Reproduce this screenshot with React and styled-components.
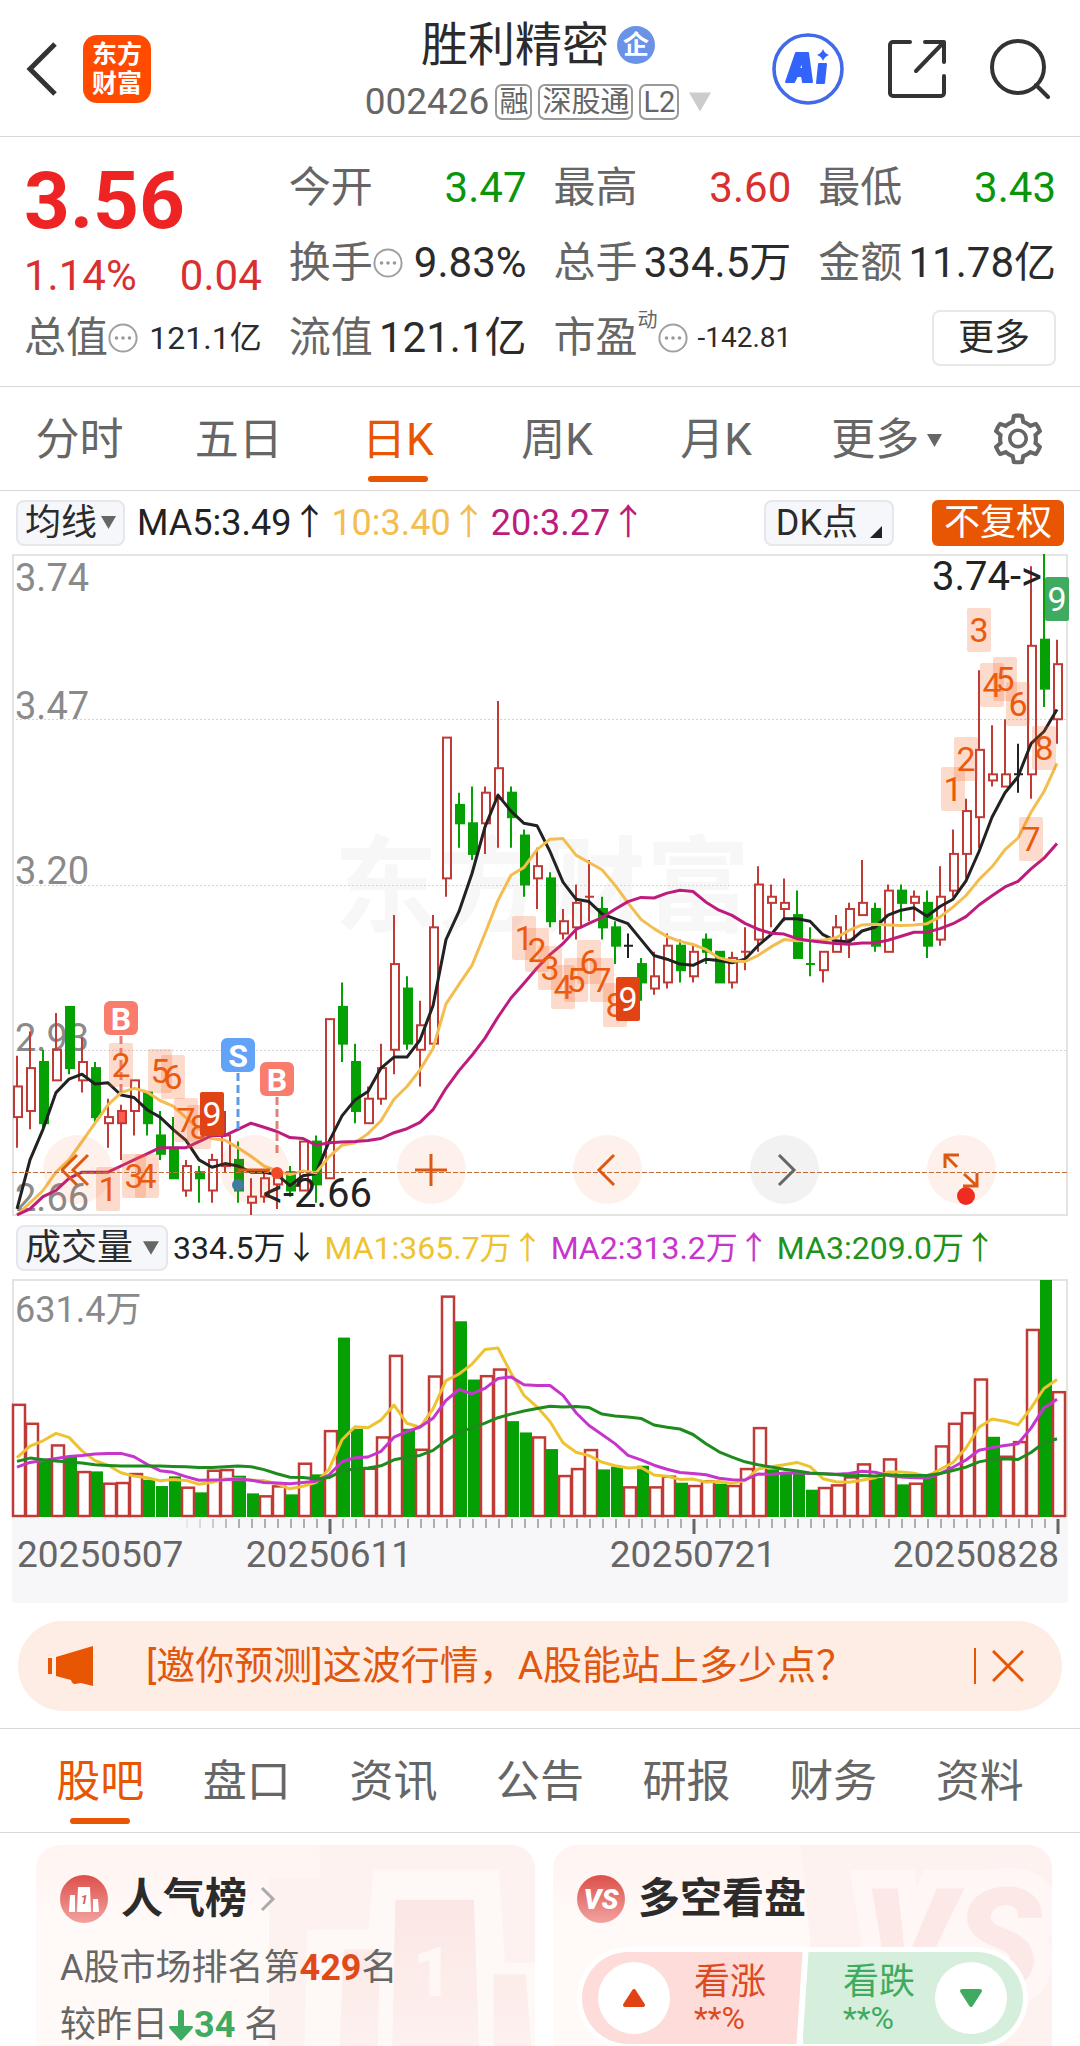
import React, { useState } from 'react';
import styled, { createGlobalStyle, css } from 'styled-components';
import { AiOutlineSetting } from 'react-icons/ai';

const color = {
  brand: '#e85604',
  red: '#d9302f',
  green: '#0b950b',
  candleRed: '#c03a36',
  candleGreen: '#04a004',
  text: '#2b2b2b',
  sub: '#666666',
  axis: '#8a8a8a',
  line: '#d8d8d8',
  frame: '#e4e4e4',
  chip: '#f6f7fa',
};

const flexCenter = css`
  display: flex;
  justify-content: center;
  align-items: center;
`;

// [high, body top, body bottom, low, kind] in cents. u: up, d: down, f: flat, s: selected
const candles = [
  [292, 287, 282, 277, 'u'],
  [296, 290, 283, 280, 'u'],
  [293, 291, 281, 280, 'd'],
  [299, 293, 288, 288, 'u'],
  [300, 300, 290, 289, 'd'],
  [295, 291, 288, 286, 'u'],
  [291, 290, 282, 281, 'd'],
  [285, 282, 281, 277, 'u'],
  [284, 283, 281, 275, 's'],
  [288, 288, 283, 279, 'u'],
  [286, 286, 281, 279, 'd'],
  [283, 279, 276, 275, 'd'],
  [282, 277, 272, 272, 'd'],
  [275, 274, 270, 269, 'u'],
  [274, 273, 272, 268, 'd'],
  [276, 275, 270, 268, 'u'],
  [283, 279, 274, 273, 'u'],
  [278, 275, 270, 268, 'd'],
  [272, 269, 268, 266, 'u'],
  [273, 272, 269, 268, 'u'],
  [273, 273, 271, 267, 'u'],
  [274, 273, 270, 269, 'd'],
  [278, 278, 270, 270, 'u'],
  [279, 278, 271, 268, 'd'],
  [298, 298, 272, 272, 'u'],
  [304, 300, 294, 291, 'd'],
  [294, 291, 283, 281, 'd'],
  [287, 285, 281, 281, 'u'],
  [294, 290, 285, 284, 'u'],
  [315, 307, 293, 289, 'u'],
  [305, 303, 294, 293, 'd'],
  [301, 297, 293, 287, 'u'],
  [315, 313, 294, 294, 'u'],
  [344, 344, 321, 318, 'u'],
  [335, 333, 330, 326, 'd'],
  [336, 330, 325, 324, 'd'],
  [336, 335, 330, 325, 'u'],
  [350, 339, 334, 326, 'u'],
  [336, 335, 331, 326, 'd'],
  [329, 328, 320, 318, 'd'],
  [326, 323, 321, 316, 'u'],
  [322, 321, 314, 313, 'd'],
  [316, 314, 312, 311, 'u'],
  [320, 317, 313, 311, 'u'],
  [324, 318, 318, 314, 'u'],
  [318, 316, 313, 311, 'd'],
  [314, 313, 310, 307, 'd'],
  [312, 310, 310, 308, 'f'],
  [308, 307, 304, 301, 'd'],
  [309, 305, 303, 302, 'u'],
  [312, 310, 304, 303, 'u'],
  [311, 310, 306, 304, 'd'],
  [310, 309, 305, 304, 'u'],
  [312, 311, 309, 307, 'd'],
  [309, 309, 304, 304, 'd'],
  [309, 308, 304, 303, 'u'],
  [313, 309, 309, 306, 'u'],
  [323, 320, 311, 309, 'u'],
  [320, 318, 317, 313, 'u'],
  [321, 317, 316, 314, 'u'],
  [319, 315, 308, 308, 'd'],
  [313, 307, 307, 305, 'd'],
  [309, 309, 306, 304, 'u'],
  [315, 313, 309, 309, 'u'],
  [317, 316, 311, 308, 'u'],
  [324, 317, 315, 315, 'u'],
  [317, 316, 310, 309, 'd'],
  [320, 319, 309, 309, 'u'],
  [320, 319, 317, 314, 'd'],
  [319, 318, 317, 314, 'u'],
  [319, 317, 310, 308, 'd'],
  [323, 318, 311, 310, 'u'],
  [329, 325, 319, 318, 'u'],
  [334, 332, 325, 321, 'u'],
  [355, 342, 331, 326, 'u'],
  [346, 338, 337, 336, 'u'],
  [347, 338, 336, 336, 'u'],
  [343, 338, 338, 335, 'f'],
  [372, 359, 338, 334, 'u'],
  [374, 360, 352, 349, 'd'],
  [360, 356, 347, 343, 'u'],
];

const closes = candles.map((c) => (c[4] === 'd' ? c[2] : c[1]));

// bar volumes, VOLUME_PEAK stands for 631.4万
const VOLUME_PEAK = 709;
const volumes = [
  337, 280, 169, 215, 179, 135, 134, 100, 102, 129, 109, 90, 119, 88, 71, 139,
  141, 121, 68, 62, 92, 65, 160, 125, 258, 536, 262, 145, 239, 484, 262, 202,
  422, 662, 585, 410, 423, 443, 285, 251, 239, 201, 123, 144, 201, 140, 148, 89,
  151, 89, 121, 100, 93, 107, 97, 93, 144, 267, 140, 127, 127, 79, 87, 95, 119,
  158, 115, 173, 95, 100, 117, 212, 280, 312, 413, 238, 181, 225, 562, 709, 375,
];

// averages of the days before the window has enough history
const priceHeads = {
  5: [267, 275, 280, 286],
  10: [266, 268, 270, 273, 275, 278, 281, 284, 286],
  20: [
    266, 267, 269, 270, 272, 273, 273, 273, 274, 275, 276, 277, 277, 277, 278,
    279, 279, 280, 281,
  ],
};
const volumeHeads = {
  5: [175, 210, 226, 248],
  10: [147, 161, 167, 173, 179, 182, 186, 188, 188],
  20: [
    164, 174, 169, 165, 162, 159, 154, 152, 150, 150, 150, 150, 149, 148, 146,
    146, 148, 150, 148,
  ],
};

const average = (data, size, heads) =>
  data.map((_, i) => {
    if (i < size - 1) return heads[size][i];
    const part = data.slice(i - size + 1, i + 1);
    return part.reduce((a, b) => a + b, 0) / size;
  });

const xOf = (i) => 5 + 13 * i;
const yOf = (cents) => 661 - ((cents - 266) * 661) / 108;
const volY = (v) => 237 - (v * 236) / VOLUME_PEAK;

const toPoints = (values, y) =>
  values.map((v, i) => `${xOf(i)},${y(v).toFixed(1)}`).join(' ');

// [candle index, label, centre y, look]
const counts = [
  [7, 1, 635],
  [8, 2, 511],
  [9, 3, 622],
  [10, 4, 622],
  [11, 5, 517],
  [12, 6, 523],
  [13, 7, 566],
  [14, 8, 573],
  [15, 9, 560, '#e04314'],
  [39, 1, 384],
  [40, 2, 396],
  [41, 3, 414],
  [42, 4, 433],
  [43, 5, 426],
  [44, 6, 408],
  [45, 7, 426],
  [46, 8, 451],
  [47, 9, 445, '#e04314'],
  [72, 1, 235],
  [73, 2, 205],
  [74, 3, 76],
  [75, 4, 131],
  [76, 5, 125],
  [77, 6, 150],
  [78, 7, 285],
  [79, 8, 194],
  [80, 9, 45, '#3fab60'],
];

// [candle index, letter, badge y, line end y, colour]
const signals = [
  [8, 'B', 464, 539, '#f97c6c', '#e58078'],
  [17, 'S', 501, 576, '#62a3f8', '#5c9be8'],
  [20, 'B', 525, 603, '#f97c6c', '#e58078'],
];

const Caret = ({ size = 14, fill = '#666' }) => (
  <svg width={size} height={size} viewBox='0 0 14 14' aria-hidden='true'>
    <path d='M0 1h14L7 13z' fill={fill} />
  </svg>
);

const MoreDots = () => (
  <svg width='30' height='30' viewBox='0 0 30 30' aria-hidden='true'>
    <circle cx='15' cy='15' r='13.6' fill='none' stroke='#a0a0a0' strokeWidth='2' />
    <circle cx='8.5' cy='15' r='1.8' fill='#999' />
    <circle cx='15' cy='15' r='1.8' fill='#999' />
    <circle cx='21.5' cy='15' r='1.8' fill='#999' />
  </svg>
);

const Header = () => (
  <HeaderBar>
    <HeaderSide>
      <IconButton aria-label='返回'>
        <svg width='32' height='56' viewBox='0 0 32 56' fill='none'>
          <path d='M29 3L4 28l25 25' stroke='#333' strokeWidth='5' />
        </svg>
      </IconButton>
      <BrandLogo href='#home'>
        <span>东方</span>
        <span>财富</span>
      </BrandLogo>
    </HeaderSide>
    <HeaderTitle>
      <TitleRow>
        <h1>胜利精密</h1>
        <CompanyBadge>企</CompanyBadge>
      </TitleRow>
      <CodeRow>
        <span>002426</span>
        <Tag>融</Tag>
        <Tag>深股通</Tag>
        <Tag>L2</Tag>
        <CodeCaret>
          <Caret size={22} fill='#cccccc' />
        </CodeCaret>
      </CodeRow>
    </HeaderTitle>
    <HeaderSide $end>
      <IconButton aria-label='Ai'>
        <svg width='72' height='72' viewBox='0 0 72 72'>
          <circle cx='36' cy='36' r='34' fill='none' stroke='#4169ea' strokeWidth='3.6' />
          <path
            d='M24 20h12l4 29h-9l-1-6h-5l-3 6h-8zM30 27l-3 9h4z'
            fill='#3264fb'
            stroke='#3264fb'
            strokeWidth='2'
            strokeLinejoin='round'
            fillRule='evenodd'
          />
          <path
            d='M47 31h7l-2 19h-7z'
            fill='#3264fb'
            stroke='#3264fb'
            strokeWidth='2'
            strokeLinejoin='round'
          />
          <path d='M51 16q1.500 4.500 6 6-4.500 1.500-6 6-1.500-4.500-6-6 4.500-1.500 6-6z' fill='#3264fb' />
        </svg>
      </IconButton>
      <IconButton aria-label='分享'>
        <svg
          width='58'
          height='58'
          viewBox='0 0 58 58'
          fill='none'
          stroke='#333'
          strokeWidth='4'
          strokeLinecap='round'
          strokeLinejoin='round'>
          <path d='M22 2H5a3 3 0 0 0-3 3v48a3 3 0 0 0 3 3h48a3 3 0 0 0 3-3V36' />
          <path d='M37 2h19v20M55 3L28 31' />
        </svg>
      </IconButton>
      <IconButton aria-label='搜索'>
        <svg
          width='60'
          height='60'
          viewBox='0 0 60 60'
          fill='none'
          stroke='#333'
          strokeWidth='4'
          strokeLinecap='round'>
          <circle cx='28' cy='28' r='26' />
          <path d='M46 46l12 12' />
        </svg>
      </IconButton>
    </HeaderSide>
  </HeaderBar>
);

const Quote = () => (
  <QuoteGrid>
    <PriceCell>
      <strong>3.56</strong>
      <div>
        <span>1.14%</span>
        <span>0.04</span>
      </div>
    </PriceCell>
    <Cell>
      <Label>今开</Label>
      <Value $tone={color.green}>3.47</Value>
    </Cell>
    <Cell>
      <Label>最高</Label>
      <Value $tone={color.red}>3.60</Value>
    </Cell>
    <Cell>
      <Label>最低</Label>
      <Value $tone={color.green}>3.43</Value>
    </Cell>
    <Cell>
      <Label>
        换手
        <MoreDots />
      </Label>
      <Value>9.83%</Value>
    </Cell>
    <Cell>
      <Label>总手</Label>
      <Value>334.5万</Value>
    </Cell>
    <Cell>
      <Label>金额</Label>
      <Value>11.78亿</Value>
    </Cell>
    <Cell>
      <Label>
        总值
        <MoreDots />
      </Label>
      <Value $size={32}>121.1亿</Value>
    </Cell>
    <Cell>
      <Label>流值</Label>
      <Value>121.1亿</Value>
    </Cell>
    <Cell>
      <Label>
        市盈
        <sup>动</sup>
        <MoreDots />
      </Label>
      <Value $size={28}>-142.81</Value>
    </Cell>
    <Cell $end>
      <MoreButton>更多</MoreButton>
    </Cell>
  </QuoteGrid>
);

const periods = ['分时', '五日', '日K', '周K', '月K'];

const PeriodTabs = () => {
  const [active, setActive] = useState('日K');

  return (
    <PeriodBar>
      {periods.map((name) => (
        <Tab key={name} $on={name === active} onClick={() => setActive(name)}>
          {name}
        </Tab>
      ))}
      <Tab>
        更多
        <Caret size={15} />
      </Tab>
      <IconButton aria-label='设置'>
        <AiOutlineSetting size={58} color='#666' />
      </IconButton>
    </PeriodBar>
  );
};

const Candle = ({ data, index }) => {
  const [high, top, bottom, low, kind] = data;
  const x = xOf(index);
  const stroke = { u: color.candleRed, s: color.candleRed, d: color.candleGreen, f: '#222' }[kind];

  if (top === bottom) {
    return (
      <path
        d={`M${x} ${yOf(high)}V${yOf(low)}M${x - 4} ${yOf(top)}h9`}
        stroke={stroke}
        strokeWidth='2'
      />
    );
  }
  return (
    <g stroke={stroke} strokeWidth='2'>
      <path d={`M${x} ${yOf(high)}V${yOf(top)}M${x} ${yOf(bottom)}V${yOf(low)}`} />
      <rect
        x={x - 3}
        y={yOf(top)}
        width='8'
        height={yOf(bottom) - yOf(top)}
        fill={{ u: 'none', s: '#ff5b4f', d: color.candleGreen }[kind]}
      />
    </g>
  );
};

const PriceChart = () => (
  <ChartFrame>
    <ChartSvg viewBox='0 0 1056 662' role='img' aria-label='日K'>
      <text x='322' y='370' fontSize='104' fontWeight='700' fill='#f7f7f7'>
        东方财富
      </text>
      <g stroke='#d4d4d4' strokeDasharray='2 2'>
        <path d='M0 165.500h1056M0 331.500h1056M0 496.500h1056' />
      </g>
      <rect x='1' y='1' width='1054' height='660' fill='none' stroke={color.frame} strokeWidth='2' />
      <g fill={color.axis} fontSize='38'>
        <text x='3' y='37'>3.74</text>
        <text x='3' y='165'>3.47</text>
        <text x='3' y='330'>3.20</text>
        <text x='3' y='497'>2.93</text>
        <text x='3' y='657'>2.66</text>
      </g>
      {candles.map((data, i) => (
        <Candle key={i} data={data} index={i} />
      ))}
      <g fill='none' strokeWidth='3' strokeLinejoin='round'>
        <polyline points={toPoints(average(closes, 5, priceHeads), yOf)} stroke='#222' />
        <polyline points={toPoints(average(closes, 10, priceHeads), yOf)} stroke='#f3bd4f' />
        <polyline points={toPoints(average(closes, 20, priceHeads), yOf)} stroke='#bd1c7c' />
      </g>
      {signals.map(([i, letter, y, end, fill, stroke]) => (
        <g key={i}>
          <path
            d={`M${xOf(i)} ${y + 18}V${end}`}
            stroke={stroke}
            strokeWidth='3'
            strokeDasharray='8 4'
          />
          <rect x={xOf(i) - 17} y={y - 17} width='34' height='34' rx='6' fill={fill} />
          <text
            x={xOf(i)}
            y={y + 12}
            fontSize='32'
            fontWeight='700'
            fill='#fff'
            textAnchor='middle'>
            {letter}
          </text>
        </g>
      ))}
      {counts.map(([i, label, y, fill]) => (
        <g key={i}>
          <rect
            x={xOf(i) - 12}
            y={y - 22}
            width='24'
            height='44'
            rx='2'
            fill={fill || '#f56a2a'}
            fillOpacity={fill ? 1 : 0.24}
          />
          <text
            x={xOf(i)}
            y={y + 12}
            fontSize='34'
            fill={fill ? '#fff' : '#ea5a0c'}
            textAnchor='middle'>
            {label}
          </text>
        </g>
      ))}
      <path d='M0 618.500h1056' stroke='#c0713c' strokeDasharray='5 2' />
      <circle cx='226' cy='631' r='6' fill='#2f80b0' />
      <circle cx='265' cy='619' r='6' fill='#f04a2a' />
      <g fill='#222' fontSize='40' textAnchor='end'>
        <text x='1030' y='36'>3.74-&gt;</text>
        <text x='360' y='653'>&lt;-2.66</text>
      </g>
    </ChartSvg>
    <ChartTools>
      <ToolButton aria-label='最早'>
        <svg width='34' height='34' viewBox='0 0 34 34'>
          <path d='M16 2L1 17l15 15M27 2L12 17l15 15' />
        </svg>
      </ToolButton>
      <ToolButton aria-label='缩小'>
        <svg width='34' height='34' viewBox='0 0 34 34'>
          <path d='M1 17h32' />
        </svg>
      </ToolButton>
      <ToolButton aria-label='放大'>
        <svg width='34' height='34' viewBox='0 0 34 34'>
          <path d='M1 17h32M17 1v32' />
        </svg>
      </ToolButton>
      <ToolButton aria-label='向前'>
        <svg width='34' height='34' viewBox='0 0 34 34'>
          <path d='M23 2L8 17l15 15' />
        </svg>
      </ToolButton>
      <ToolButton aria-label='向后' $muted>
        <svg width='34' height='34' viewBox='0 0 34 34'>
          <path d='M11 2l15 15-15 15' />
        </svg>
      </ToolButton>
      <ToolButton aria-label='全屏'>
        <svg width='36' height='72' viewBox='0 0 36 72'>
          <path d='M2 34V21h14M2 21l12 12M34 39v13H20M34 52L21 40' />
          <circle cx='23' cy='62' r='9' fill='#f02b20' stroke='none' />
        </svg>
      </ToolButton>
    </ChartTools>
  </ChartFrame>
);

const majorTicks = [24, 52, 80];

const VolumeChart = () => (
  <ChartFrame>
    <ChartSvg viewBox='0 0 1056 324' role='img' aria-label='成交量'>
      <rect y='239' width='1056' height='85' fill='#f7f7fa' />
      <path d='M1 238V1h1054v237' fill='none' stroke={color.frame} strokeWidth='2' />
      <text x='3' y='43' fontSize='36' fill={color.axis}>
        631.4万
      </text>
      {volumes.map((v, i) => {
        const up = i === 0 || closes[i] >= closes[i - 1];
        return up ? (
          <rect
            key={i}
            x={xOf(i) - 4}
            y={volY(v) + 1}
            width='12'
            height={236 - volY(v)}
            fill='#fff'
            stroke={color.candleRed}
            strokeWidth='2.500'
          />
        ) : (
          <rect
            key={i}
            x={xOf(i) - 4}
            y={volY(v)}
            width='12'
            height={238 - volY(v)}
            fill={color.candleGreen}
          />
        );
      })}
      <g fill='none' strokeWidth='3' strokeLinejoin='round'>
        <polyline points={toPoints(average(volumes, 5, volumeHeads), volY)} stroke='#eec331' />
        <polyline points={toPoints(average(volumes, 10, volumeHeads), volY)} stroke='#c636cc' />
        <polyline points={toPoints(average(volumes, 20, volumeHeads), volY)} stroke='#1d8c1d' />
      </g>
      {candles.map((_, i) =>
        i < 13 ? null : (
          <path
            key={i}
            d={`M${xOf(i) + 1} 240V${majorTicks.includes(i) ? 255 : 249}`}
            stroke={color.sub}
            strokeWidth={majorTicks.includes(i) ? 3 : 1}
            opacity={Math.min(1, (i - 12) / 5)}
          />
        )
      )}
      <g fontSize='37' fill={color.sub}>
        <text x='5' y='288'>20250507</text>
        <text x='317' y='288' textAnchor='middle'>20250611</text>
        <text x='681' y='288' textAnchor='middle'>20250721</text>
        <text x='1047' y='288' textAnchor='end'>20250828</text>
      </g>
    </ChartSvg>
  </ChartFrame>
);

const infoTabs = ['股吧', '盘口', '资讯', '公告', '研报', '财务', '资料'];

const InfoTabs = () => {
  const [active, setActive] = useState('股吧');

  return (
    <InfoBar>
      {infoTabs.map((name) => (
        <Tab key={name} $on={name === active} onClick={() => setActive(name)}>
          {name}
        </Tab>
      ))}
    </InfoBar>
  );
};

const RankCard = () => (
  <Card>
    <CardArt viewBox='0 0 499 201' preserveAspectRatio='xMaxYMin slice' aria-hidden='true'>
      <path d='M291 0h208v201H242V32h49z' fill='#fdf2f0' />
      <path d='M343 24h121l6 90h29v87H276l3-119h59z' fill='#fef9f7' />
      <path
        d='M364 53h76l5 148h-84zM314 101h35l-2 100h-37zM459 125h31l6 76h-37z'
        fill='url(#podium)'
      />
      <text x='400' y='146' fontSize='66' fontWeight='900' fill='#fef7f5' textAnchor='middle'>
        1
      </text>
      <defs>
        <linearGradient id='podium' x1='0' y1='0' x2='0' y2='1'>
          <stop offset='0' stopColor='#fbe7e5' />
          <stop offset='1' stopColor='#fdf1ef' />
        </linearGradient>
      </defs>
    </CardArt>
    <CardHead>
      <RoundIcon>
        <svg width='48' height='48' viewBox='0 0 48 48' aria-hidden='true'>
          <path d='M18 12h12l1 25H17zM10 20h5v17H9zM33 24h5l1 13h-6z' fill='#fff' />
          <text x='24' y='29' fontSize='13' fontWeight='700' fill='#dc5a55' textAnchor='middle'>
            1
          </text>
        </svg>
      </RoundIcon>
      <h2>人气榜</h2>
      <svg width='16' height='26' viewBox='0 0 16 26' fill='none' aria-hidden='true'>
        <path d='M2 2l11 11L2 24' stroke='#aaa' strokeWidth='3' />
      </svg>
    </CardHead>
    <RankLine>
      A股市场排名第<b>429</b>名
    </RankLine>
    <RankLine $down>
      较昨日
      <svg width='26' height='34' viewBox='0 0 26 34' aria-hidden='true'>
        <path d='M10 3q3-3 6 0v15h8q2 1 0 3L14 32q-1 1-2 0L2 21q-2-2 0-3h8z' fill='#3fab60' />
      </svg>
      <b>34</b> 名
    </RankLine>
  </Card>
);

const VoteCard = () => (
  <Card>
    <CardArt viewBox='0 0 499 201' preserveAspectRatio='xMaxYMin slice' aria-hidden='true'>
      <path d='M256 0h243v201H276z' fill='#fdf2f0' />
      <text
        x='316'
        y='140'
        fontSize='138'
        fontWeight='900'
        fontStyle='italic'
        fill='#fbe8e7'
        stroke='#fef7f5'
        strokeWidth='36'
        paintOrder='stroke'>
        VS
      </text>
    </CardArt>
    <CardHead>
      <RoundIcon>VS</RoundIcon>
      <h2>多空看盘</h2>
    </CardHead>
    <VotePill>
      <VoteHalf>
        <VoteDot>
          <svg width='24' height='20' viewBox='0 0 24 20' aria-hidden='true'>
            <path
              d='M12 3l9 14H3z'
              fill='#e04314'
              stroke='#e04314'
              strokeWidth='4'
              strokeLinejoin='round'
            />
          </svg>
        </VoteDot>
        <VoteText>
          看涨
          <small>**%</small>
        </VoteText>
      </VoteHalf>
      <VoteHalf $down>
        <VoteText>
          看跌
          <small>**%</small>
        </VoteText>
        <VoteDot>
          <svg width='24' height='20' viewBox='0 0 24 20' aria-hidden='true'>
            <path
              d='M12 17l9-14H3z'
              fill='#3fab60'
              stroke='#3fab60'
              strokeWidth='4'
              strokeLinejoin='round'
            />
          </svg>
        </VoteDot>
      </VoteHalf>
    </VotePill>
  </Card>
);

const App = () => {
  const [isNoticeOn, setNoticeOn] = useState(true);

  return (
    <>
      <GlobalStyle />
      <Header />
      <Quote />
      <PeriodTabs />
      <IndicatorRow>
        <ChipButton>
          均线
          <Caret size={15} />
        </ChipButton>
        <Averages>
          <Average $tone='#222222'>MA5:3.49↑</Average>
          <Average $tone='#f3bd4f'>10:3.40↑</Average>
          <Average $tone='#bd1c7c'>20:3.27↑</Average>
        </Averages>
        <ChipButton $wide>
          DK点
          <svg width='12' height='34' viewBox='0 0 12 34' aria-hidden='true'>
            <path d='M12 20v12H0z' fill='#222' />
          </svg>
        </ChipButton>
        <AdjustButton>不复权</AdjustButton>
      </IndicatorRow>
      <PriceChart />
      <IndicatorRow $tight>
        <ChipButton>
          成交量
          <ChipCaret>
            <Caret size={16} />
          </ChipCaret>
        </ChipButton>
        <Averages $small>
          <Average $tone='#222222'>334.5万↓</Average>
          <Average $tone='#eec331'>MA1:365.7万↑</Average>
          <Average $tone='#c636cc'>MA2:313.2万↑</Average>
          <Average $tone='#1d931d'>MA3:209.0万↑</Average>
        </Averages>
      </IndicatorRow>
      <VolumeChart />
      {isNoticeOn && (
        <Notice>
          <svg width='46' height='42' viewBox='0 0 46 42' aria-hidden='true'>
            <path d='M0 13h4v16H0zM8 12L45 1v40l-12-3-6 1q-3 0-4-4L8 31z' fill={color.brand} />
          </svg>
          <a href='#predict'>[邀你预测]这波行情，A股能站上多少点？</a>
          <CloseButton aria-label='关闭' onClick={() => setNoticeOn(false)}>
            <svg width='32' height='32' viewBox='0 0 32 32'>
              <path d='M1 1l30 30M31 1L1 31' stroke={color.brand} strokeWidth='3' />
            </svg>
          </CloseButton>
        </Notice>
      )}
      <InfoTabs />
      <Cards>
        <RankCard />
        <VoteCard />
      </Cards>
    </>
  );
};
export default App;

const GlobalStyle = createGlobalStyle`
  * {
    box-sizing: border-box;
  }

  body {
    margin: 0;
    background-color: white;
    color: ${color.text};
    font-family: Roboto, 'Noto Sans CJK SC', sans-serif;
  }

  h1, h2, p {
    margin: 0;
  }

  button {
    padding: 0;
    border: none;
    background: none;
    color: inherit;
    font: inherit;
    cursor: pointer;
  }

  a {
    color: inherit;
    text-decoration: none;
  }

  svg {
    flex-shrink: 0;
  }
`;

const HeaderBar = styled.header`
  display: grid;
  grid-template-columns: 1fr auto 1fr;
  align-items: center;
  height: 137px;
  padding: 2px 30px 0 26px;
  border-bottom: 1px solid ${color.line};
`;

const HeaderSide = styled.div`
  display: flex;
  align-items: center;
  justify-content: ${({ $end }) => ($end ? 'flex-end' : 'flex-start')};
  gap: ${({ $end }) => ($end ? '44px' : '25px')};
`;

const IconButton = styled.button`
  ${flexCenter}
`;

const BrandLogo = styled.a`
  ${flexCenter}
  flex-direction: column;
  width: 68px;
  height: 68px;
  border-radius: 14px;
  background-color: #ff4a00;
  color: white;
  font-size: 25px;
  font-weight: 700;
  line-height: 29px;
`;

const HeaderTitle = styled.div`
  display: flex;
  flex-direction: column;
  align-items: center;
  gap: 8px;
`;

const TitleRow = styled.div`
  display: flex;
  align-items: center;
  gap: 8px;

  h1 {
    font-size: 47px;
    font-weight: 400;
    line-height: 58px;
  }
`;

const CompanyBadge = styled.span`
  ${flexCenter}
  width: 38px;
  height: 38px;
  border-radius: 50%;
  background-color: #6a92e6;
  color: white;
  font-size: 26px;
  font-weight: 700;
  line-height: 26px;
`;

const CodeRow = styled.div`
  display: flex;
  align-items: center;
  gap: 6px;
  color: ${color.sub};
  font-size: 37px;
  line-height: 40px;
`;

const Tag = styled.span`
  ${flexCenter}
  height: 36px;
  padding: 0 2px;
  border: 2px solid #999;
  border-radius: 7px;
  font-size: 29px;
  line-height: 32px;
`;

const CodeCaret = styled.span`
  ${flexCenter}
  padding-left: 4px;
`;

const QuoteGrid = styled.section`
  display: grid;
  grid-template-columns: repeat(4, 1fr);
  grid-auto-rows: 75px;
  column-gap: 27px;
  padding: 13px 24px 11px;
  border-bottom: 1px solid ${color.line};
`;

const PriceCell = styled.div`
  grid-row: span 2;
  display: flex;
  flex-direction: column;
  padding-top: 6px;

  strong {
    color: #ee2424;
    font-size: 80px;
    font-weight: 700;
    line-height: 90px;
  }

  div {
    display: flex;
    justify-content: space-between;
    color: ${color.red};
    font-size: 42px;
    line-height: 60px;
  }
`;

const Cell = styled.div`
  display: flex;
  align-items: center;
  justify-content: ${({ $end }) => ($end ? 'flex-end' : 'space-between')};
  white-space: nowrap;
`;

const Label = styled.span`
  display: flex;
  align-items: center;
  color: ${color.sub};
  font-size: 42px;
  line-height: 60px;

  sup {
    align-self: flex-start;
    font-size: 20px;
    line-height: 24px;
  }
`;

const Value = styled.span`
  color: ${({ $tone }) => $tone || color.text};
  font-size: ${({ $size }) => $size || 42}px;
  line-height: 60px;
`;

const MoreButton = styled.button`
  width: 124px;
  height: 56px;
  border: 2px solid #e8e8e8;
  border-radius: 8px;
  font-size: 36px;
  line-height: 50px;
`;

const PeriodBar = styled.nav`
  display: grid;
  grid-template-columns: repeat(5, 159fr) 182fr 80fr;
  height: 104px;
  padding-right: 22px;
  border-bottom: 1px solid ${color.line};
`;

const Tab = styled.button`
  ${flexCenter}
  position: relative;
  gap: 8px;
  padding-top: 3px;
  color: ${({ $on }) => ($on ? color.brand : color.sub)};
  font-size: 44px;
  line-height: 60px;

  &::after {
    content: '';
    display: ${({ $on }) => ($on ? 'block' : 'none')};
    position: absolute;
    bottom: 8px;
    left: calc(50% - 30px);
    width: 60px;
    height: 6px;
    border-radius: 3px;
    background-color: ${color.brand};
  }
`;

const IndicatorRow = styled.div`
  display: flex;
  align-items: center;
  height: 63px;
  padding: 0 16px;
  gap: ${({ $tight }) => ($tight ? '5px' : '12px')};
`;

const ChipButton = styled.button`
  ${flexCenter}
  height: 46px;
  padding: 0 ${({ $wide }) => ($wide ? '10px' : '7px')};
  gap: ${({ $wide }) => ($wide ? '12px' : '4px')};
  border: 2px solid #e6e7ec;
  border-radius: 8px;
  background-color: ${color.chip};
  font-size: 36px;
  line-height: 42px;
  white-space: nowrap;
`;

const ChipCaret = styled.span`
  ${flexCenter}
  padding-left: 6px;
`;

const Averages = styled.div`
  flex: 1;
  display: flex;
  gap: ${({ $small }) => ($small ? '7px' : '4px')};
  font-size: ${({ $small }) => ($small ? '32px' : '36px')};
  line-height: 46px;
  white-space: nowrap;
`;

const Average = styled.span`
  color: ${({ $tone }) => $tone};
`;

const AdjustButton = styled.button`
  height: 46px;
  margin-left: 26px;
  padding: 0 12px;
  border-radius: 6px;
  background-color: ${color.brand};
  color: white;
  font-size: 36px;
  line-height: 44px;
`;

const ChartFrame = styled.section`
  position: relative;
  margin: 0 12px;
`;

const ChartSvg = styled.svg`
  display: block;
  width: 100%;
  height: auto;
  overflow: visible;
`;

const ChartTools = styled.div`
  position: absolute;
  right: 72px;
  bottom: 12px;
  left: 31px;
  display: flex;
  justify-content: space-between;
`;

const ToolButton = styled.button`
  ${flexCenter}
  width: 69px;
  height: 69px;
  border-radius: 50%;
  background-color: ${({ $muted }) =>
    $muted ? 'rgba(0, 0, 0, 0.05)' : 'rgba(240, 90, 20, 0.09)'};

  path {
    fill: none;
    stroke: ${({ $muted }) => ($muted ? '#666666' : '#da5a14')};
    stroke-width: 3px;
  }
`;

const Notice = styled.aside`
  display: flex;
  align-items: center;
  height: 90px;
  margin: 18px 18px 17px;
  padding: 0 38px 0 30px;
  border-radius: 45px;
  background-color: #fdede4;
  color: #e0570f;

  a {
    flex: 1;
    padding-left: 52px;
    font-size: 39px;
    line-height: 54px;
    white-space: nowrap;
  }
`;

const CloseButton = styled.button`
  ${flexCenter}
  height: 36px;
  padding-left: 16px;
  border-left: 2px solid ${color.brand};
`;

const InfoBar = styled.nav`
  display: grid;
  grid-template-columns: repeat(7, 1fr);
  height: 105px;
  padding: 0 27px;
  border-top: 1px solid ${color.line};
  border-bottom: 1px solid ${color.line};
`;

const Cards = styled.section`
  display: grid;
  grid-template-columns: 1fr 1fr;
  gap: 18px;
  padding: 12px 28px 0 36px;
`;

const Card = styled.article`
  position: relative;
  z-index: 0;
  padding: 30px 24px 2px;
  overflow: hidden;
  border-radius: 24px 24px 0 0;
  background-image: linear-gradient(#fff4f2, #fffaf8 40%);
`;

const CardArt = styled.svg`
  position: absolute;
  inset: 0;
  z-index: -1;
  width: 100%;
  height: 100%;
`;

const CardHead = styled.div`
  display: flex;
  align-items: center;
  gap: 13px;
  height: 48px;

  h2 {
    font-size: 42px;
    font-weight: 700;
    line-height: 48px;
  }
`;

const RoundIcon = styled.span`
  ${flexCenter}
  width: 48px;
  height: 48px;
  border-radius: 50%;
  background-image: linear-gradient(#dc4f4a, #f2a3a0);
  color: white;
  font-size: 28px;
  font-style: italic;
  font-weight: 900;
`;

const RankLine = styled.p`
  display: flex;
  align-items: center;
  margin-top: ${({ $down }) => ($down ? '5px' : '19px')};
  color: ${color.sub};
  font-size: 36px;
  line-height: 52px;
  white-space: pre;

  b {
    color: ${({ $down }) => ($down ? '#3fab60' : '#e04a1a')};
  }
`;

const VotePill = styled.div`
  display: flex;
  height: 92px;
  margin: 29px 5px 0;
  border-radius: 46px;
  background-color: white;
  box-shadow: 0 0 0 5px #ffffff;
  overflow: hidden;
`;

const VoteHalf = styled.button`
  flex: 1;
  display: flex;
  align-items: center;
  justify-content: ${({ $down }) => ($down ? 'flex-end' : 'flex-start')};
  gap: ${({ $down }) => ($down ? '20px' : '24px')};
  padding: 0 16px;
  background-color: ${({ $down }) => ($down ? '#d6eedc' : '#fddcda')};
  color: ${({ $down }) => ($down ? '#3fab60' : '#dd4a22')};
  clip-path: ${({ $down }) =>
    $down
      ? 'polygon(6px 0, 100% 0, 100% 100%, 0 100%)'
      : 'polygon(0 0, 100% 0, calc(100% - 6px) 100%, 0 100%)'};
`;

const VoteDot = styled.span`
  ${flexCenter}
  width: 72px;
  height: 72px;
  border-radius: 50%;
  background-color: white;
`;

const VoteText = styled.span`
  display: flex;
  flex-direction: column;
  font-size: 36px;
  line-height: 40px;
  text-align: left;

  small {
    font-size: 32px;
    line-height: 32px;
  }
`;
